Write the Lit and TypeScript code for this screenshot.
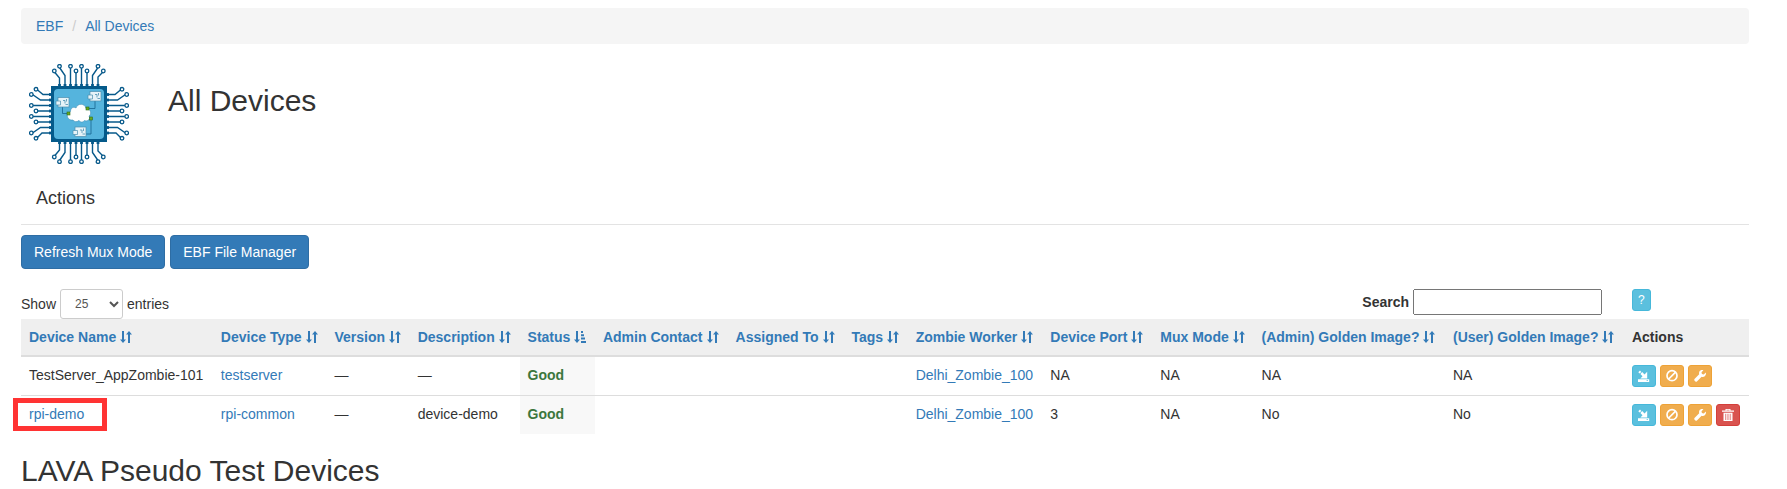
import { LitElement, html, css, svg, nothing } from "lit";
import { customElement, state } from "lit/decorators.js";

interface Device {
  name: string;
  nameIsLink: boolean;
  type: string;
  version: string;
  description: string;
  status: string;
  worker: string;
  port: string;
  mux: string;
  adminGolden: string;
  userGolden: string;
  removable: boolean;
}

const DEVICES: Device[] = [
  {
    name: "TestServer_AppZombie-101", nameIsLink: false, type: "testserver", version: "—", description: "—",
    status: "Good", worker: "Delhi_Zombie_100", port: "NA", mux: "NA", adminGolden: "NA", userGolden: "NA", removable: false,
  },
  {
    name: "rpi-demo", nameIsLink: true, type: "rpi-common", version: "—", description: "device-demo",
    status: "Good", worker: "Delhi_Zombie_100", port: "3", mux: "NA", adminGolden: "No", userGolden: "No", removable: true,
  },
];

const COLUMNS = [
  "Device Name", "Device Type", "Version", "Description", "Status", "Admin Contact", "Assigned To", "Tags",
  "Zombie Worker", "Device Port", "Mux Mode", "(Admin) Golden Image?", "(User) Golden Image?",
];

const sortBoth = html`<svg class="sort" viewBox="0 0 12 14" aria-hidden="true">
  <path d="M2 1h2v8.500h2L3 13 0 9.500h2z M8 13V4.500H6L9 1l3 3.500h-2V13z" /></svg>`;

const sortAsc = html`<svg class="sort" viewBox="0 0 12 14" aria-hidden="true">
  <path d="M2 1h2v8.500h2L3 13 0 9.500h2z M7 1h2v2H7z M7 4.300h3v2H7z M7 7.600h4v2H7z M7 11h5v2H7z" /></svg>`;

const icons = {
  save: svg`<path d="M.3 2.200L2 .6l1.300 1.300-1.700 1.600z M2.400 3.900l1.800-1.800 2.300 2.300L9.200 1.700v6.700H2.400l2.100-2.100z M0 9.200h11.200V12H0z" /><path class="dot" d="M8.600 10.200H10v.8H8.600z" />`,
  ban: svg`<circle class="ring" cx="6" cy="5.700" r="5" /><path class="ring" d="M2.700 9l6.600-6.600" />`,
  wrench: svg`<path d="M11.800 2.600L9.800 4.500 7.900 4.100 7.500 2.300 9.400.3C7.800-.3 6.200.2 5.400 1.500 4.900 2.500 4.900 3.400 5.200 4.300L.5 9c-1.100 1.100 1.300 3.500 2.400 2.400L7.600 6.700c1.100.4 2.300.2 3.200-.5 1.100-.9 1.400-2.300 1-3.600z" />`,
  trash: svg`<path d="M0 1.500h3.500V0h5v1.500H12v1.300H0z M1.500 3.700h9V12h-9z" /><path class="gap" d="M3.500 4.800V11M5.200 4.800V11M6.900 4.800V11M8.600 4.800V11M4.500 1.200h3" />`,
};

const glyph = (name: keyof typeof icons) =>
  html`<svg class="glyph" viewBox="0 0 12 12" aria-hidden="true">${icons[name]}</svg>`;

@customElement("chip-logo")
export class ChipLogo extends LitElement {
  static styles = css`
    :host { display: block; width: 100px; height: 100px; }
    svg { display: block; width: 100%; height: 100%; }
    .lead { fill: none; stroke: #07598a; stroke-width: 1.4; }
    .pad { fill: #fff; stroke: #07598a; stroke-width: 1.3; }
    .pin { fill: #07598a; }
    .body { fill: #055a8a; }
    .die { fill: #55b4dd; }
    .wire { fill: none; stroke: #17658f; stroke-width: 0.8; }
    .cloud { fill: #fff; stroke: #3f8fb5; stroke-width: 0.6; }
    .node { fill: #6aaa1e; stroke: #2f6c1b; stroke-width: 0.6; }
    .board { fill: #e6f3f8; stroke: #4a8fb0; stroke-width: 0.7; }
    .trace { fill: none; stroke: #4a8fb0; stroke-width: 0.8; }
  `;

  /* One side of the package; the other three are reflections of it. */
  private side(transform: string) {
    return svg`<g transform=${transform}>
      <path class="lead" d="M31.500 23v-8l-5-6M37 23v-10.500l-5.500-8M42.500 23V4M48 23V9M53.500 23V4M59 23V9M64.500 23V12.500l5.500-8M70 23v-9l5-5" />
      <circle class="pad" cx="26.300" cy="8" r="1.800" /><circle class="pad" cx="31.500" cy="3.300" r="1.800" />
      <circle class="pad" cx="42.500" cy="3.300" r="1.800" /><circle class="pad" cx="48" cy="8" r="1.800" />
      <circle class="pad" cx="53.500" cy="3.300" r="1.800" /><circle class="pad" cx="59" cy="8" r="1.800" />
      <circle class="pad" cx="70" cy="3.300" r="1.800" /><circle class="pad" cx="75.300" cy="8" r="1.800" />
      ${[31.5, 37, 42.5, 48, 53.5, 59, 64.5, 70].map((x) => svg`<rect class="pin" x=${x - 1.4} y="21" width="2.800" height="3" />`)}
    </g>`;
  }

  private board(x: number, y: number) {
    return svg`<g transform=${`translate(${x} ${y})`}>
      <rect class="board" x="2" y=".5" width="11" height="9.500" />
      <path class="board" d="M0 4h4.500v4H0z" /><path class="trace" d="M7 3.500h2v3M9.500 7.500h2.500M10.500 2v2.500" />
    </g>`;
  }

  render() {
    return html`<svg viewBox="1 1 100 100" role="img" aria-label="EBF">
      ${["", "matrix(1 0 0 -1 0 102)", "matrix(0 1 1 0 0 0)", "matrix(0 1 -1 0 102 0)"].map((t) => this.side(t))}
      <rect class="body" x="23" y="23" width="56" height="56" />
      <rect class="die" x="26" y="26" width="50" height="50" rx="4" />
      <path class="wire" d="M34.500 44v6.500h6M67 38v7.500h-8M63 56v15h-5" />
      <path class="cloud" d="M45 57c-6 1-8-7-2.500-8.500 0-4 3.500-5 5.500-3.500 1.500-5 9-5 10 .5 5 0 6 6 3 7.500 2 3-1.500 6-4.500 4.500-2 2.500-4.500 1.500-5.500 0-2 1.800-5 1.300-6-.5z" />
      <rect class="node" x="39" y="49" width="3" height="3" /><rect class="node" x="58" y="44" width="3" height="3" />
      <rect class="node" x="61.500" y="54" width="3" height="3" />
      ${this.board(28, 34)}${this.board(60, 28)}${this.board(45, 63.5)}
    </svg>`;
  }
}

@customElement("app-root")
export class AppRoot extends LitElement {
  @state() private query = "";

  static styles = css`
    :host {
      display: block;
      padding: 8px 38px 0 21px;
      background: #fff;
      color: #333;
      font: 14px/20px "Liberation Sans", Arial, sans-serif;
    }
    *, ::before, ::after { box-sizing: border-box; }
    a { color: #337ab7; text-decoration: none; }
    h2, h4 { margin: 0; font-weight: 400; }
    h2 { font-size: 30px; line-height: 34px; }
    h4 { font-size: 18px; line-height: 20px; padding: 0 15px; }

    .breadcrumb { display: flex; padding: 8px 15px; margin: 0; list-style: none; background: #f5f5f5; border-radius: 4px; }
    .breadcrumb li + li::before { content: "/"; padding: 0 9px; color: #ccc; }

    .title { display: flex; gap: 39px; padding: 20px 8px 0; }
    .title h2 { padding-top: 20px; }
    .section { margin-top: 24px; padding-bottom: 16px; border-bottom: 1px solid #e3e3e3; }

    .toolbar { display: flex; gap: 5px; margin-top: 10px; }
    button { font: inherit; color: #fff; border: 1px solid; cursor: pointer; }
    .primary { height: 34px; padding: 0 12px; border-radius: 4px; background: #337ab7; border-color: #2e6da4; }

    .filters { display: flex; align-items: flex-start; margin-top: 20px; }
    .length { display: flex; align-items: center; gap: 4px; }
    .length select {
      width: 63px; height: 30px; padding: 0 10px; border: 1px solid #ccc; border-radius: 3px;
      background: #fff; color: #555; font: 12px/18px "Liberation Sans", Arial, sans-serif;
    }
    .search { display: flex; align-items: center; gap: 4px; margin-left: auto; font-weight: 700; }
    .search input { width: 189px; height: 26px; padding: 0 4px; font: inherit; font-weight: 400; }
    .help { width: 125px; padding-left: 8px; margin-left: 22px; }

    .mini {
      display: inline-flex; align-items: center; justify-content: center; height: 22px; padding: 0 5px;
      border-radius: 3px; font-size: 12px; line-height: 18px;
    }
    .glyph { width: 12px; height: 12px; fill: #fff; overflow: visible; }
    .ring { fill: none; stroke: #fff; stroke-width: 1.7; }
    .gap { fill: none; stroke: #d9534f; stroke-width: 0.6; }
    .dot { fill: #5bc0de; }
    .info { background: #5bc0de; border-color: #46b8da; }
    .warning { background: #f0ad4e; border-color: #eea236; }
    .danger { background: #d9534f; border-color: #d43f3a; }

    table { width: 100%; border-spacing: 0; }
    th, td { padding: 8px; text-align: left; vertical-align: top; white-space: nowrap; }
    th { background: #efefef; border-bottom: 2px solid #ddd; }
    td { height: 38px; }
    tr + tr td { height: 39px; border-top: 1px solid #ddd; }
    .sort { width: 12px; height: 14px; margin-left: 4px; vertical-align: -2px; fill: #337ab7; }
    .status { background: #f8f8f8; color: #3c763d; font-weight: 700; }
    .actions { display: flex; gap: 4px; }
    .marked { position: relative; }
    .marked::after {
      content: ""; position: absolute; inset: 2px auto 3px -8px; width: 94px; border: 5px solid #ff3333; pointer-events: none;
    }
    .lava { margin-top: 20px; }
  `;

  private row(d: Device) {
    return html`<tr>
      <td class=${d.nameIsLink ? "marked" : ""}>${d.nameIsLink ? html`<a href="#device">${d.name}</a>` : d.name}</td>
      <td><a href="#type">${d.type}</a></td>
      <td>${d.version}</td>
      <td>${d.description}</td>
      <td class="status">${d.status}</td>
      <td></td><td></td><td></td>
      <td><a href="#worker">${d.worker}</a></td>
      <td>${d.port}</td>
      <td>${d.mux}</td>
      <td>${d.adminGolden}</td>
      <td>${d.userGolden}</td>
      <td><div class="actions">
        <button class="mini info" aria-label="Reserve">${glyph("save")}</button>
        <button class="mini warning" aria-label="Disable">${glyph("ban")}</button>
        <button class="mini warning" aria-label="Maintenance">${glyph("wrench")}</button>
        ${d.removable ? html`<button class="mini danger" aria-label="Delete">${glyph("trash")}</button>` : nothing}
      </div></td>
    </tr>`;
  }

  render() {
    const q = this.query.toLowerCase();
    const rows = DEVICES.filter((d) => (d.name + d.type + d.worker).toLowerCase().includes(q));
    return html`
      <nav><ol class="breadcrumb">
        <li><a href="#home">EBF</a></li>
        <li><a href="#devices">All Devices</a></li>
      </ol></nav>
      <header class="title"><chip-logo></chip-logo><h2>All Devices</h2></header>
      <div class="section"><h4>Actions</h4></div>
      <div class="toolbar">
        <button class="primary">Refresh Mux Mode</button>
        <button class="primary">EBF File Manager</button>
      </div>
      <div class="filters">
        <label class="length">Show
          <select><option>10</option><option selected>25</option><option>50</option></select>
          entries</label>
        <label class="search">Search
          <input type="search" .value=${this.query}
            @input=${(e: Event) => (this.query = (e.target as HTMLInputElement).value)} /></label>
        <div class="help"><button class="mini info">?</button></div>
      </div>
      <table>
        <thead><tr>
          ${COLUMNS.map((c) => html`<th scope="col"><a href="#sort">${c}${c === "Status" ? sortAsc : sortBoth}</a></th>`)}
          <th scope="col">Actions</th>
        </tr></thead>
        <tbody>${rows.map((d) => this.row(d))}</tbody>
      </table>
      <h2 class="lava">LAVA Pseudo Test Devices</h2>
    `;
  }
}
